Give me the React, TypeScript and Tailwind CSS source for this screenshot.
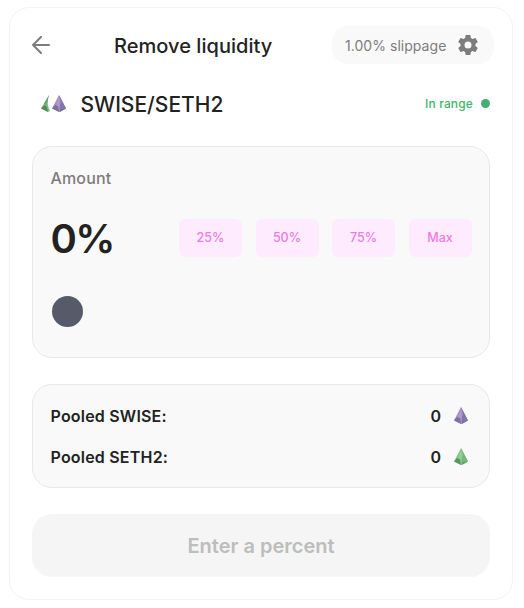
type PyramidProps = { tone: 'purple' | 'green'; className?: string };

const tones = {
  purple: { left: '#a193c4', right: '#8475a6', light: '#b3a3d4', dark: '#6d6188' },
  green: { left: '#8ac78b', right: '#76b67a', light: '#98d398', dark: '#467f4e' },
};

function Pyramid({ tone, className = '' }: PyramidProps) {
  const c = tones[tone];
  return (
    <svg viewBox="0 0 14 17" className={`h-[17px] w-[14px] shrink-0 ${className}`}>
      <path d="M7 0 0 13.500l7 3.500 7-3.500z" fill={c.left} />
      <path d="M7 0 8 17l6-3.500z" fill={c.right} />
      <path d="M7 1 4.500 9l3 3 1.500-5z" fill={c.light} opacity="0.6" />
      <path d="m0 13.500 3-3.500 3 1.500 1 5.500z" fill={c.dark} opacity="0.7" />
      <path d="m7 17 1.500-3 5.500-.5z" fill={c.dark} opacity="0.35" />
    </svg>
  );
}

function HalfPyramid() {
  return (
    <svg viewBox="0 0 9 17" className="h-[17px] w-[9px] shrink-0">
      <path d="M8 0 0 13.500l7 3.500 2-1Q5 9 8 0z" fill="#82bd85" />
      <path d="m0 13.500 3.500-3.500 2.500 2 1 5z" fill="#467f4e" opacity="0.8" />
      <path d="M8 0 3 8.500l2.500 1.500z" fill="#68a56d" />
    </svg>
  );
}

const presets = ['25%', '50%', '75%', 'Max'];

const pooled: { label: string; tone: 'purple' | 'green' }[] = [
  { label: 'Pooled SWISE:', tone: 'purple' },
  { label: 'Pooled SETH2:', tone: 'green' },
];

export default function App() {
  return (
    <div className="h-[608px] w-[524px] bg-white pt-[7px] pl-[9px] font-['Inter',sans-serif] text-[#222]">
      <main className="flex h-[593px] w-[504px] flex-col rounded-[20px] border border-[#f3f3f3] px-[22px] pt-[18px]">
        <header className="flex h-[38px] shrink-0 items-center">
          <button aria-label="Back" className="text-[#7d7d7d]">
            <svg viewBox="0 0 18 18" className="h-[18px] w-[18px]" fill="none" stroke="currentColor" strokeWidth="2" strokeLinecap="round" strokeLinejoin="round">
              <path d="M17 9H1M9 1 1 9l8 8" />
            </svg>
          </button>
          <h1 className="ml-[64px] w-[218px] pt-[2px] text-xl leading-none font-medium tracking-[0.04px] whitespace-nowrap">Remove liquidity</h1>
          <button className="-mr-1 flex h-[38px] w-[162px] shrink-0 items-center rounded-2xl bg-[#f9f9f9] pl-[13px] text-[#7d7d7d]">
            <span className="w-[113px] pt-px text-left text-sm tracking-[0.04px] whitespace-nowrap">1.00% slippage</span>
            <svg viewBox="2 2 20 20" className="h-5 w-5" fill="currentColor">
              <path d="M19.430 12.980c.04-.32.07-.64.07-.98s-.03-.66-.07-.98l2.110-1.650a.5.5 0 0 0 .12-.64l-2-3.460a.5.5 0 0 0-.61-.22l-2.490 1a7.300 7.300 0 0 0-1.690-.98l-.38-2.650A.49.49 0 0 0 14 2h-4a.49.49 0 0 0-.49.42l-.38 2.650c-.61.25-1.170.59-1.690.98l-2.490-1a.5.5 0 0 0-.61.22l-2 3.460a.5.5 0 0 0 .12.64l2.110 1.650a7.900 7.900 0 0 0 0 1.960l-2.110 1.650a.5.5 0 0 0-.12.64l2 3.460c.12.22.39.3.61.22l2.490-1c.52.4 1.080.73 1.690.98l.38 2.650c.03.24.24.42.49.42h4c.25 0 .46-.18.49-.42l.38-2.650c.61-.25 1.170-.59 1.690-.98l2.490 1c.23.09.49 0 .61-.22l2-3.460a.5.5 0 0 0-.12-.64zM12 15.500a3.500 3.500 0 1 1 0-7 3.500 3.500 0 0 1 0 7z" />
            </svg>
          </button>
        </header>

        <div className="mt-[24px] flex h-[30px] shrink-0 items-center justify-between">
          <div className="flex items-center pl-[9px]">
            <HalfPyramid />
            <Pyramid tone="purple" className="ml-[2px]" />
            <span className="ml-[14.5px] pt-[2px] text-[21px] leading-none font-medium">SWISE/SETH2</span>
          </div>
          <div className="flex items-center gap-2 text-xs font-medium text-[#40b66b]">
            <span className="pt-px tracking-[0.15px]">In range</span>
            <span className="h-[9px] w-[9px] rounded-full bg-[#43ae72]" />
          </div>
        </div>

        <section className="mt-[28px] h-[212px] shrink-0 rounded-[20px] border border-[#e8e8e8] bg-[#f9f9f9] px-[17.5px] pt-[19px]">
          <div className="h-6 text-base leading-6 font-medium tracking-[0.15px] text-[#7d7d7d]">Amount</div>
          <div className="mt-[21px] flex h-[54px] items-center">
            <div className="w-[129.5px] pt-px text-[40px] leading-none font-semibold tracking-[-1.6px]">0%</div>
            <div className="flex gap-[13.500px]">
              {presets.map((preset) => (
                <button key={preset} className="flex h-[38px] w-[63px] items-center justify-center rounded-md bg-[#feecfe] text-[12.5px] font-medium text-[#ec7be6]">
                  {preset}
                </button>
              ))}
            </div>
          </div>
          <div className="mt-[31px] ml-[1.5px] h-[31px] w-[31px] rounded-full bg-[#565a69]" />
        </section>

        <section className="mt-[26px] h-[104px] shrink-0 rounded-[20px] border border-[#e8e8e8] bg-[#f9f9f9] px-[17.5px] pt-[10px]">
          {pooled.map(({ label, tone }) => (
            <div key={label} className="flex h-[41px] items-center text-base font-semibold">
              <span className="tracking-[0.2px]">{label}</span>
              <span className="ml-auto">0</span>
              <Pyramid tone={tone} className="mr-[4px] ml-[12.5px]" />
            </div>
          ))}
        </section>

        <button className="mt-[26px] h-[63px] shrink-0 rounded-[20px] bg-[#f5f5f5] text-xl font-semibold text-[#bdbdbd]">
          Enter a percent
        </button>
      </main>
    </div>
  );
}
